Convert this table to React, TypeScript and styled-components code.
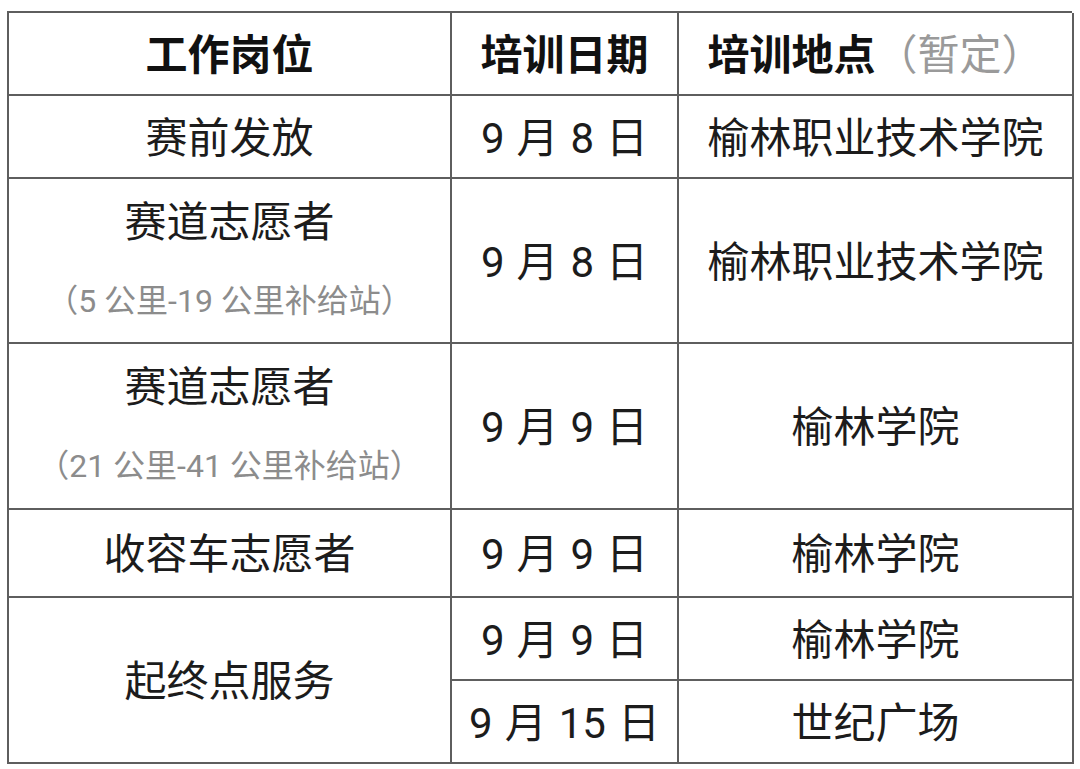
import React from "react";
import styled, { createGlobalStyle } from "styled-components";

const Global = createGlobalStyle`
  html, body { margin: 0; padding: 0; background: #ffffff; }
  body { font-family: Roboto, "Noto Sans CJK SC", sans-serif; color: #1c1c1c; }
`;

const Page = styled.div`
  width: 1080px;
  height: 769px;
  padding: 11px 0 0 7px;
  box-sizing: border-box;
`;

const Grid = styled.div`
  display: grid;
  width: 1065px;
  grid-template-columns: 443px 227px 395px;
  grid-template-rows: 83px 83px 165px 166px 88px 83px 83px;
  border-top: 2px solid #5e5e5e;
  border-left: 2px solid #5e5e5e;
  box-sizing: border-box;
`;

const Cell = styled.div<{ $rows?: number; $head?: boolean }>`
  grid-row: span ${(p) => p.$rows ?? 1};
  border-right: 2px solid #5e5e5e;
  border-bottom: 2px solid #5e5e5e;
  display: flex;
  flex-direction: column;
  align-items: center;
  justify-content: center;
  padding-bottom: 5px;
  box-sizing: border-box;
  font-size: 42px;
  font-weight: ${(p) => (p.$head ? 700 : 400)};
  color: ${(p) => (p.$head ? "#111" : "#1c1c1c")};
  white-space: nowrap;
`;

const Line = styled.div`
  height: 82px;
  display: flex;
  align-items: center;
`;

const Note = styled.span`
  font-size: 32px;
  color: #8c8c8c;
  font-weight: 400;
`;

const Tentative = styled.span`
  font-weight: 400;
  color: #9a9a9a;
`;

const Gap = styled.span`
  display: inline-block;
  width: 12px;
`;

const Date = ({ m, d }: { m: number; d: number }) => (
  <>
    {m}
    <Gap />月<Gap />
    {d}
    <Gap />日
  </>
);

export default function App() {
  return (
    <>
      <Global />
      <Page>
        <Grid>
          <Cell $head>工作岗位</Cell>
          <Cell $head>培训日期</Cell>
          <Cell $head>
            <span>
              培训地点<Tentative>（暂定）</Tentative>
            </span>
          </Cell>

          <Cell>赛前发放</Cell>
          <Cell>
            <span>
              <Date m={9} d={8} />
            </span>
          </Cell>
          <Cell>榆林职业技术学院</Cell>

          <Cell>
            <Line>赛道志愿者</Line>
            <Line>
              <Note>（5 公里-19 公里补给站）</Note>
            </Line>
          </Cell>
          <Cell>
            <span>
              <Date m={9} d={8} />
            </span>
          </Cell>
          <Cell>榆林职业技术学院</Cell>

          <Cell>
            <Line>赛道志愿者</Line>
            <Line>
              <Note>（21 公里-41 公里补给站）</Note>
            </Line>
          </Cell>
          <Cell>
            <span>
              <Date m={9} d={9} />
            </span>
          </Cell>
          <Cell>榆林学院</Cell>

          <Cell>收容车志愿者</Cell>
          <Cell>
            <span>
              <Date m={9} d={9} />
            </span>
          </Cell>
          <Cell>榆林学院</Cell>

          <Cell $rows={2}>起终点服务</Cell>
          <Cell>
            <span>
              <Date m={9} d={9} />
            </span>
          </Cell>
          <Cell>榆林学院</Cell>
          <Cell>
            <span>
              <Date m={9} d={15} />
            </span>
          </Cell>
          <Cell>世纪广场</Cell>
        </Grid>
      </Page>
    </>
  );
}
